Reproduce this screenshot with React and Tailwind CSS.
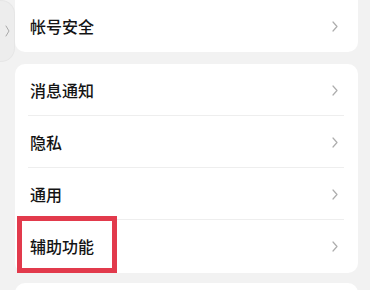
import React from "react";

function Chevron() {
  return (
    <svg className="h-[11px] w-[6px]" viewBox="0 0 6 11" fill="none">
      <path d="M1 1l4 4.5-4 4.5" stroke="#adadad" strokeWidth="1.2" strokeLinecap="round" strokeLinejoin="round" />
    </svg>
  );
}

function Row({ label, divider = true, highlight = false }) {
  return (
    <div className="relative flex h-[52px] items-center justify-between pl-[15px] pr-[20px]">
      <span className="text-[16px] font-medium text-[#141414]">{label}</span>
      <Chevron />
      {divider && <div className="absolute bottom-0 left-[13px] right-[14px] h-px bg-[#eeeeee]" />}
      {highlight && <div className="absolute left-[2px] top-[-4px] h-[57px] w-[100px] border-[5px] border-[#e23a4c]" />}
    </div>
  );
}

export default function App() {
  const items = ["消息通知", "隐私", "通用", "辅助功能"];
  return (
    <div className="relative h-[290px] w-[370px] overflow-hidden bg-[#f2f2f2]" style={{ fontFamily: '"Noto Sans CJK SC", "Noto Sans", sans-serif' }}>
      <div className="ml-[15px] w-[343px] rounded-b-[10px] bg-white">
        <Row label="帐号安全" divider={false} />
      </div>
      <div className="ml-[15px] mt-[12px] w-[343px] rounded-[10px] bg-white pb-px">
        {items.map((item, i) => (
          <Row label={item} key={item} divider={i < items.length - 1} highlight={item === "辅助功能"} />
        ))}
      </div>
      <div className="ml-[15px] mt-[10px] h-[20px] w-[343px] rounded-t-[10px] bg-white" />
      <div className="absolute left-0 top-0 flex h-[62px] w-[15px] items-center justify-center rounded-r-[14px] border border-l-0 border-[#e6e6e6] bg-[#ededed]">
        <svg className="h-[12px] w-[5px]" viewBox="0 0 5 12" fill="none">
          <path d="M1 1l3 5-3 5" stroke="#a8a8a8" strokeWidth="1" strokeLinecap="round" />
        </svg>
      </div>
    </div>
  );
}
